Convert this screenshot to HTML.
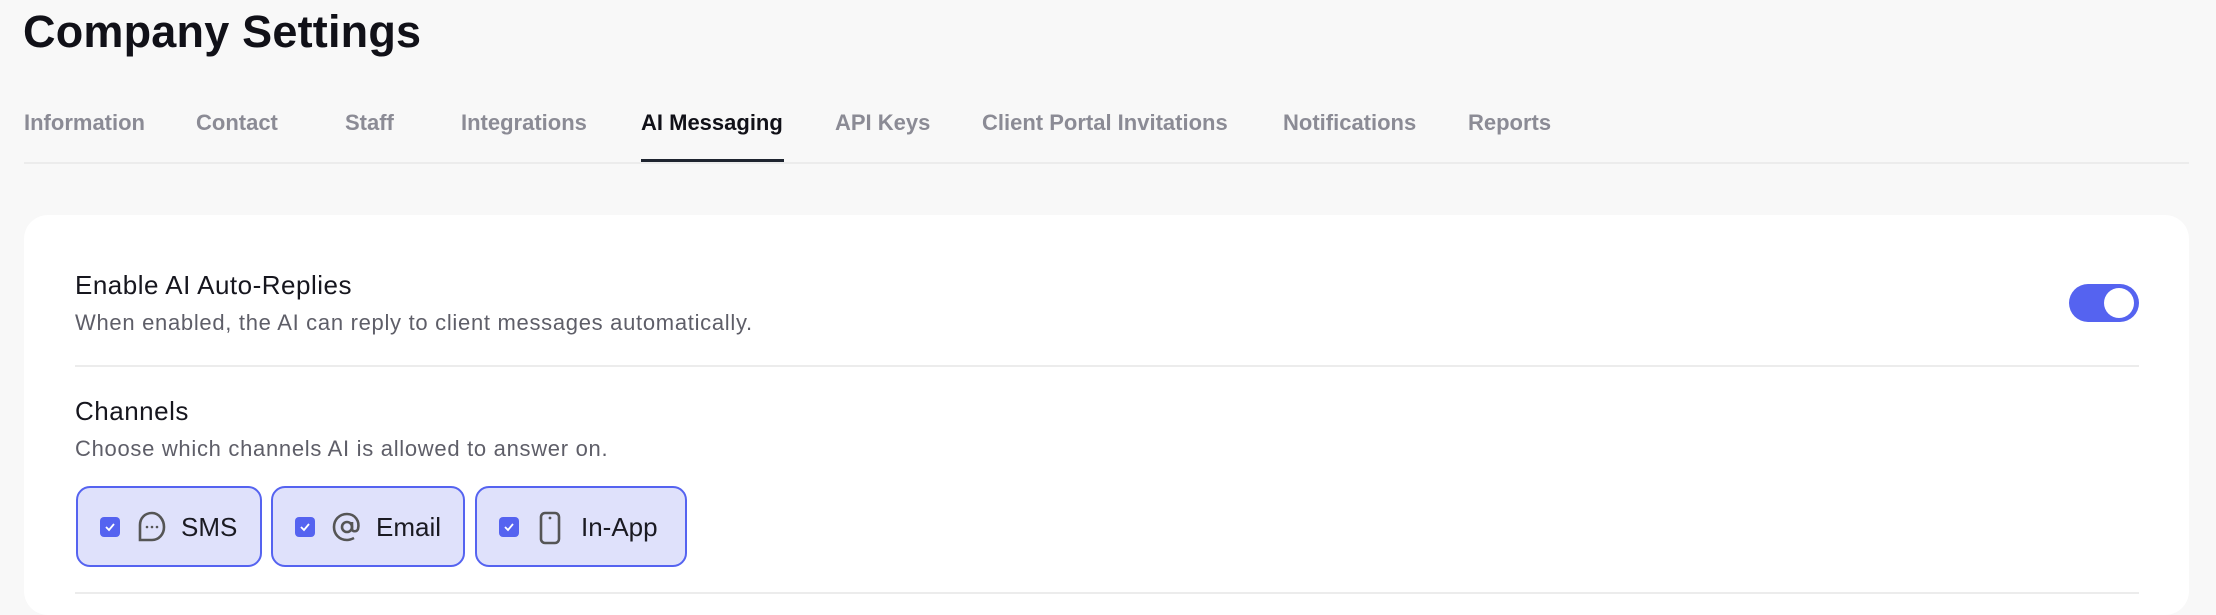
<!DOCTYPE html>
<html><head><meta charset="utf-8"><style>
*{margin:0;padding:0;box-sizing:border-box}
body{width:2216px;height:594px;background:#f8f8f8;font-family:"Liberation Sans",sans-serif;position:relative;overflow:hidden}
.a{position:absolute;white-space:nowrap}
h1{position:absolute;left:23px;top:6px;font-size:45px;font-weight:700;color:#111118;letter-spacing:0.2px}
.tab{position:absolute;top:110px;font-size:22px;color:#8b8b95;font-weight:600}
.tab.act{color:#111118}
.card{position:absolute;left:24px;top:215px;width:2165px;height:400px;background:#fff;border-radius:24px}
.chip{position:absolute;top:486px;height:81px;background:#dfe1fb;border:2.5px solid #5563f0;border-radius:14px}
.cb{position:absolute;left:22px;top:29px;width:20px;height:20px;background:#5563f0;border-radius:4px}
.lbl{position:absolute;top:24px;font-size:26px;color:#1a1a22}
.sub{font-size:22px;letter-spacing:0.7px;color:#5e5e68}
</style></head><body>
<h1>Company Settings</h1>
<div class="tab" style="left:24px">Information</div>
<div class="tab" style="left:196px">Contact</div>
<div class="tab" style="left:345px">Staff</div>
<div class="tab" style="left:461px">Integrations</div>
<div class="tab act" style="left:641px">AI Messaging</div>
<div class="tab" style="left:835px">API Keys</div>
<div class="tab" style="left:982px">Client Portal Invitations</div>
<div class="tab" style="left:1283px">Notifications</div>
<div class="tab" style="left:1468px">Reports</div>
<div class="a" style="left:24px;top:162px;width:2165px;height:2px;background:#ececec"></div>
<div class="a" style="left:641px;top:159px;width:143px;height:3px;background:#1f2530"></div>
<div class="card"></div>
<div class="a" style="left:75px;top:270px;font-size:26px;letter-spacing:0.5px;color:#16161e">Enable AI Auto-Replies</div>
<div class="a sub" style="left:75px;top:310px">When enabled, the AI can reply to client messages automatically.</div>
<div class="a" style="left:2069px;top:284px;width:70px;height:38px;background:#5563f0;border-radius:19px"><div style="position:absolute;right:5px;top:4px;width:30px;height:30px;background:#fff;border-radius:50%"></div></div>
<div class="a" style="left:75px;top:365px;width:2064px;height:1.5px;background:#ececec"></div>
<div class="a" style="left:75px;top:396px;font-size:26px;letter-spacing:0.5px;color:#16161e">Channels</div>
<div class="a sub" style="left:75px;top:436px">Choose which channels AI is allowed to answer on.</div>
<div class="chip" style="left:76px;width:186px"><div class="cb"><svg width="20" height="20" viewBox="0 0 20 20"><path d="M6 10l3 3 5-6" stroke="#fff" stroke-width="1.8" fill="none"/></svg></div>
<svg class="a" style="left:58px;top:22px" width="32" height="34" viewBox="0 0 32 34"><path d="M16 3C9 3 4 8 4 15v15h12c7 0 12-6 12-13S23 3 16 3z" stroke="#555" stroke-width="2.6" fill="none"/><circle cx="11" cy="17" r="1.3" fill="#555"/><circle cx="16" cy="17" r="1.3" fill="#555"/><circle cx="21" cy="17" r="1.3" fill="#555"/></svg>
<div class="lbl" style="left:103px">SMS</div></div>
<div class="chip" style="left:271px;width:194px"><div class="cb"><svg width="20" height="20" viewBox="0 0 20 20"><path d="M6 10l3 3 5-6" stroke="#fff" stroke-width="1.8" fill="none"/></svg></div>
<svg class="a" style="left:57px;top:22px" width="34" height="34" viewBox="0 0 34 34"><circle cx="17" cy="17" r="5" stroke="#555" stroke-width="2.6" fill="none"/><path d="M22 12v7c0 3 5 3 6 0 2-8-3-15-11-15C9 4 4 10 4 17s5 13 13 13c3 0 5-1 7-2" stroke="#555" stroke-width="2.6" fill="none"/></svg>
<div class="lbl" style="left:103px">Email</div></div>
<div class="chip" style="left:475px;width:212px"><div class="cb"><svg width="20" height="20" viewBox="0 0 20 20"><path d="M6 10l3 3 5-6" stroke="#fff" stroke-width="1.8" fill="none"/></svg></div>
<svg class="a" style="left:60px;top:22px" width="26" height="36" viewBox="0 0 26 36"><rect x="4" y="3" width="18" height="30" rx="4" stroke="#555" stroke-width="2.6" fill="none"/><circle cx="13" cy="8" r="1.4" fill="#555"/></svg>
<div class="lbl" style="left:104px">In-App</div></div>
<div class="a" style="left:75px;top:592px;width:2064px;height:2px;background:#ececec"></div>
</body></html>
